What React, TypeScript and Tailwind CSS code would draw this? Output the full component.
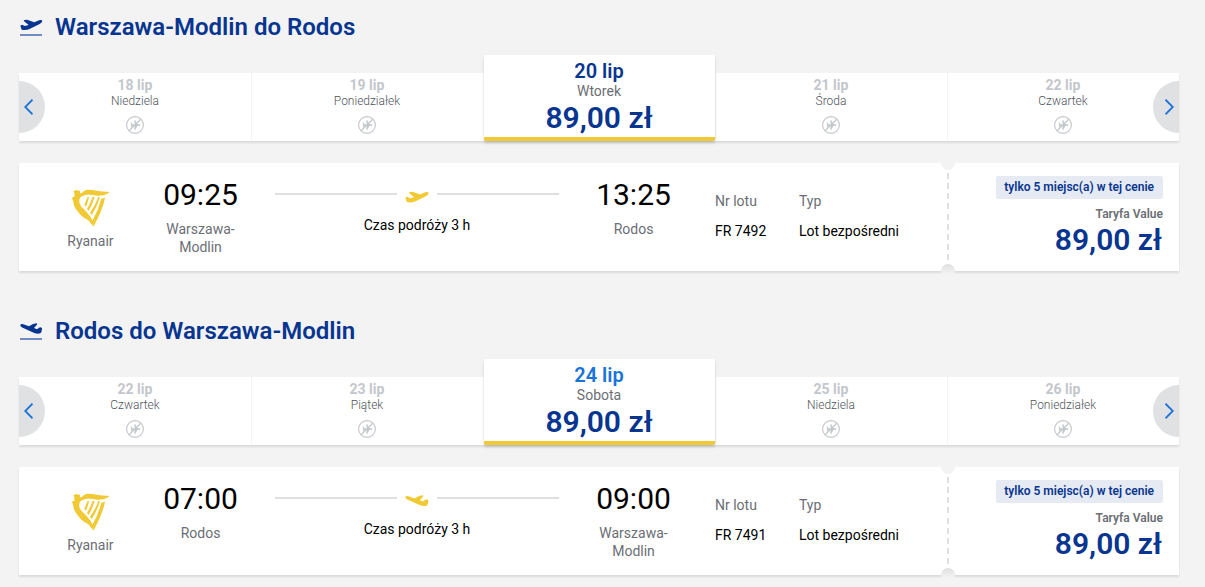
import React from "react";
import clsx from "clsx";

interface Day {
  date: string;
  name: string;
  price?: string;
}

interface Flight {
  title: string;
  direction: "outbound" | "return";
  days: Day[];
  departure: string;
  from: string;
  arrival: string;
  to: string;
  number: string;
  price: string;
}

const flights: Flight[] = [
  {
    title: "Warszawa-Modlin do Rodos",
    direction: "outbound",
    days: [
      { date: "18 lip", name: "Niedziela" },
      { date: "19 lip", name: "Poniedziałek" },
      { date: "20 lip", name: "Wtorek", price: "89,00 zł" },
      { date: "21 lip", name: "Środa" },
      { date: "22 lip", name: "Czwartek" },
    ],
    departure: "09:25",
    from: "Warszawa-Modlin",
    arrival: "13:25",
    to: "Rodos",
    number: "FR 7492",
    price: "89,00 zł",
  },
  {
    title: "Rodos do Warszawa-Modlin",
    direction: "return",
    days: [
      { date: "22 lip", name: "Czwartek" },
      { date: "23 lip", name: "Piątek" },
      { date: "24 lip", name: "Sobota", price: "89,00 zł" },
      { date: "25 lip", name: "Niedziela" },
      { date: "26 lip", name: "Poniedziałek" },
    ],
    departure: "07:00",
    from: "Rodos",
    arrival: "09:00",
    to: "Warszawa-Modlin",
    number: "FR 7491",
    price: "89,00 zł",
  },
];

const takeoffPath =
  "M1 20 L6 17 L15 21 L26 18 L15 9 L11 6 L13 3 L21 2 L43 10 L57 4 Q66 1 67 6 Q67 11 59 15 L27 31 Q17 35 5 32 Z";
const landingPath =
  "M1 6 Q3 1 10 4 L27 10 L39 3 L50 1 Q54 3 50 6 L42 15 L51 19 L57 14 Q61 11 65 14 Q68 17 65 22 Q66 28 61 31 Q53 34 43 30 L8 14 Q0 11 1 6 Z";

const HeadingIcon = ({ direction }: { direction: Flight["direction"] }) => (
  <svg className="mt-0.5 h-[18px] w-[23px] text-[#073590]" viewBox="0 0 69 54">
    <path
      d={direction === "outbound" ? takeoffPath : landingPath}
      fill="currentColor"
    />
    <rect y="46" width="66" height="4" fill="currentColor" opacity="0.8" />
  </svg>
);

const RouteIcon = ({ direction }: { direction: Flight["direction"] }) => (
  <svg className="h-3 w-6 text-[#f1c933]" viewBox="0 0 68 35" preserveAspectRatio="none">
    <path
      d={direction === "outbound" ? takeoffPath : landingPath}
      fill="currentColor"
    />
  </svg>
);

const NoFlightIcon = () => (
  <svg className="h-[18px] w-[18px] text-[#c3c7cc]" viewBox="0 0 18 18" fill="none">
    <circle cx="9" cy="9" r="8.4" stroke="currentColor" strokeWidth="1.1" />
    <path
      d="M4.6 6.4h.9l1.1 1.8h2.2L8.2 4.2h1.1l2.3 4h1.9c1.4.3 1.4 1.3 0 1.6h-1.9l-2.3 4H8.2l.6-4H6.6l-1.1 1.8h-.9l.5-2.6z"
      fill="currentColor"
    />
    <path d="M3 15 15 3" stroke="currentColor" strokeWidth="1.1" />
  </svg>
);

const HarpLogo = () => (
  <svg className="h-[38px] w-[38px] text-[#f1c933]" viewBox="0 0 114 114">
    <path
      d="M5 8 Q6 3 12 4 Q20 2 24 7 L24 14 Q31 13 36 6 Q44 0 60 3 Q82 8 113 9 Q106 16 94 19 Q77 22 62 18 Q43 14 31 22 Q22 25 22 33 Q20 44 28 53 L43 68 Q57 82 63 98 L65 113 L49 94 Q27 83 19 69 Q4 53 4 38 L0 26 L9 21 Q4 17 8 13 Z"
      fill="currentColor"
    />
    <path
      d="M99 26 Q93 60 65 112 L61 95 Q79 64 88 29 Z M47 24 Q41 37 37 48 L42 53 Q48 39 51 25 Z M62 23 Q54 45 45 60 L50 66 Q62 45 68 24 Z M79 24 Q69 51 54 71 L59 79 Q76 51 84 25 Z"
      fill="currentColor"
    />
  </svg>
);

const DayTile = ({ day, highlight }: { day: Day; highlight: boolean }) => {
  if (day.price) {
    return (
      <div className="z-10 ml-px flex h-[86px] w-[231px] flex-col items-center rounded-xs border-b-4 border-[#f1c933] bg-white pt-1 pr-px shadow-[0_2px_3px_rgba(0,0,0,0.16)]">
        <span
          className={clsx(
            "text-xl leading-6 font-semibold",
            highlight ? "text-[#1a73d9]" : "text-[#073590]"
          )}
        >
          {day.date}
        </span>
        <span className="text-sm leading-4 text-[#6b6e74]">{day.name}</span>
        <span className="text-[30px] leading-[38px] font-semibold text-[#073590]">
          {day.price}
        </span>
      </div>
    );
  }
  return (
    <div className="flex h-[68px] w-[232px] flex-col items-center border-l border-[#f3f3f3] pt-1 pr-px first:border-white">
      <span className="text-sm leading-4 font-bold text-[#c3c7cc]">
        {day.date}
      </span>
      <span className="mb-[7px] text-xs leading-4 font-light text-[#4f535a]">
        {day.name}
      </span>
      <NoFlightIcon />
    </div>
  );
};

const ArrowButton = ({ side }: { side: "left" | "right" }) => (
  <button
    className={clsx(
      "absolute top-[26px] z-20 flex h-[52px] w-[26px] items-center bg-[#dfe1e3]",
      side === "left"
        ? "left-0 rounded-r-full pl-[5px]"
        : "right-0 justify-end rounded-l-full pr-[5px]"
    )}
  >
    <svg className="h-4 w-[9px]" viewBox="0 0 9 16" fill="none">
      <path
        d={side === "left" ? "M8.5 .7 1.2 8l7.3 7.3" : "M.5 .7 7.8 8 .5 15.3"}
        stroke="#1a73d9"
        strokeWidth="1.8"
      />
    </svg>
  </button>
);

const DateCarousel = ({ flight }: { flight: Flight }) => (
  <div className="relative flex h-[86px] items-end">
    <div className="flex h-[68px] w-full items-end bg-white shadow-[0_2px_2px_rgba(0,0,0,0.1)]">
      {flight.days.map((day) => (
        <DayTile
          key={day.date}
          day={day}
          highlight={flight.direction === "return"}
        />
      ))}
    </div>
    <ArrowButton side="left" />
    <ArrowButton side="right" />
  </div>
);

const Stop = ({ time, place }: { time: string; place: string }) => (
  <div className="flex w-[77px] flex-col items-center pt-3 text-center">
    <span className="text-[30px] leading-10 text-black">{time}</span>
    <span className="mt-[5px] text-sm leading-[18px] text-[#6b6e74]">
      {place}
    </span>
  </div>
);

const FlightCard = ({ flight }: { flight: Flight }) => (
  <div className="mt-[22px] flex h-[108px] bg-white shadow-[0_2px_2px_rgba(0,0,0,0.1)]">
    <div className="flex w-[143px] flex-col items-center pt-[26px]">
      <HarpLogo />
      <span className="mt-1.5 text-sm leading-4 text-[#6b6e74]">Ryanair</span>
    </div>
    <Stop time={flight.departure} place={flight.from} />
    <div className="mx-9 w-[284px] pt-[26px] text-center">
      <div className="flex h-4 items-center justify-between">
        <span className="mb-[6px] h-0.5 w-[122px] bg-[#dfe0e1]" />
        <RouteIcon direction={flight.direction} />
        <span className="mb-[6px] h-0.5 w-[122px] bg-[#dfe0e1]" />
      </div>
      <p className="mt-3 text-sm leading-4 text-black">Czas podróży 3 h</p>
    </div>
    <Stop time={flight.arrival} place={flight.to} />
    <div className="ml-[43px] flex w-[232px] pt-[30px] text-sm leading-4">
      <div className="w-[84px]">
        <p className="text-[#6b6e74]">Nr lotu</p>
        <p className="mt-3.5 text-black">{flight.number}</p>
      </div>
      <div>
        <p className="text-[#6b6e74]">Typ</p>
        <p className="mt-3.5 text-black">Lot bezpośredni</p>
      </div>
    </div>
    {/* perforated edge of the ticket */}
    <div className="relative w-0.5 py-2.5">
      <div className="h-[88px] bg-[repeating-linear-gradient(to_bottom,#dfe0e1_0_6px,transparent_6px_10.15px)]" />
      <span className="absolute top-0 -left-1.5 h-[7px] w-3.5 rounded-b-full bg-[#f3f3f3]" />
      <span className="absolute -bottom-[3px] -left-1.5 h-2.5 w-3.5 rounded-t-full bg-linear-to-b from-[#e0e0e0] to-[#f3f3f3]" />
    </div>
    <div className="flex flex-1 flex-col items-end pt-[13px] pr-4">
      <span className="rounded-xs bg-[#e6eaf3] pr-[9px] pl-2 text-xs leading-[23px] font-semibold text-[#073590]">
        tylko 5 miejsc(a) w tej cenie
      </span>
      <span className="mt-[7px] text-xs leading-4 font-semibold text-[#6b6e74]">
        Taryfa Value
      </span>
      <span className="pr-px text-[30px] leading-9 font-semibold text-[#073590]">
        {flight.price}
      </span>
    </div>
  </div>
);

const App: React.FC = () => {
  return (
    <div className="h-[587px] overflow-hidden bg-[#f3f3f3] pr-[26px] pl-[19px] font-['Roboto',sans-serif]">
      {flights.map((flight) => (
        <section key={flight.title} className="h-[304px]">
          <h2 className="flex h-[55px] items-center gap-3 pb-0.5 pl-px text-2xl font-semibold text-[#073590]">
            <HeadingIcon direction={flight.direction} />
            {flight.title}
          </h2>
          <DateCarousel flight={flight} />
          <FlightCard flight={flight} />
        </section>
      ))}
    </div>
  );
};

export default App;
